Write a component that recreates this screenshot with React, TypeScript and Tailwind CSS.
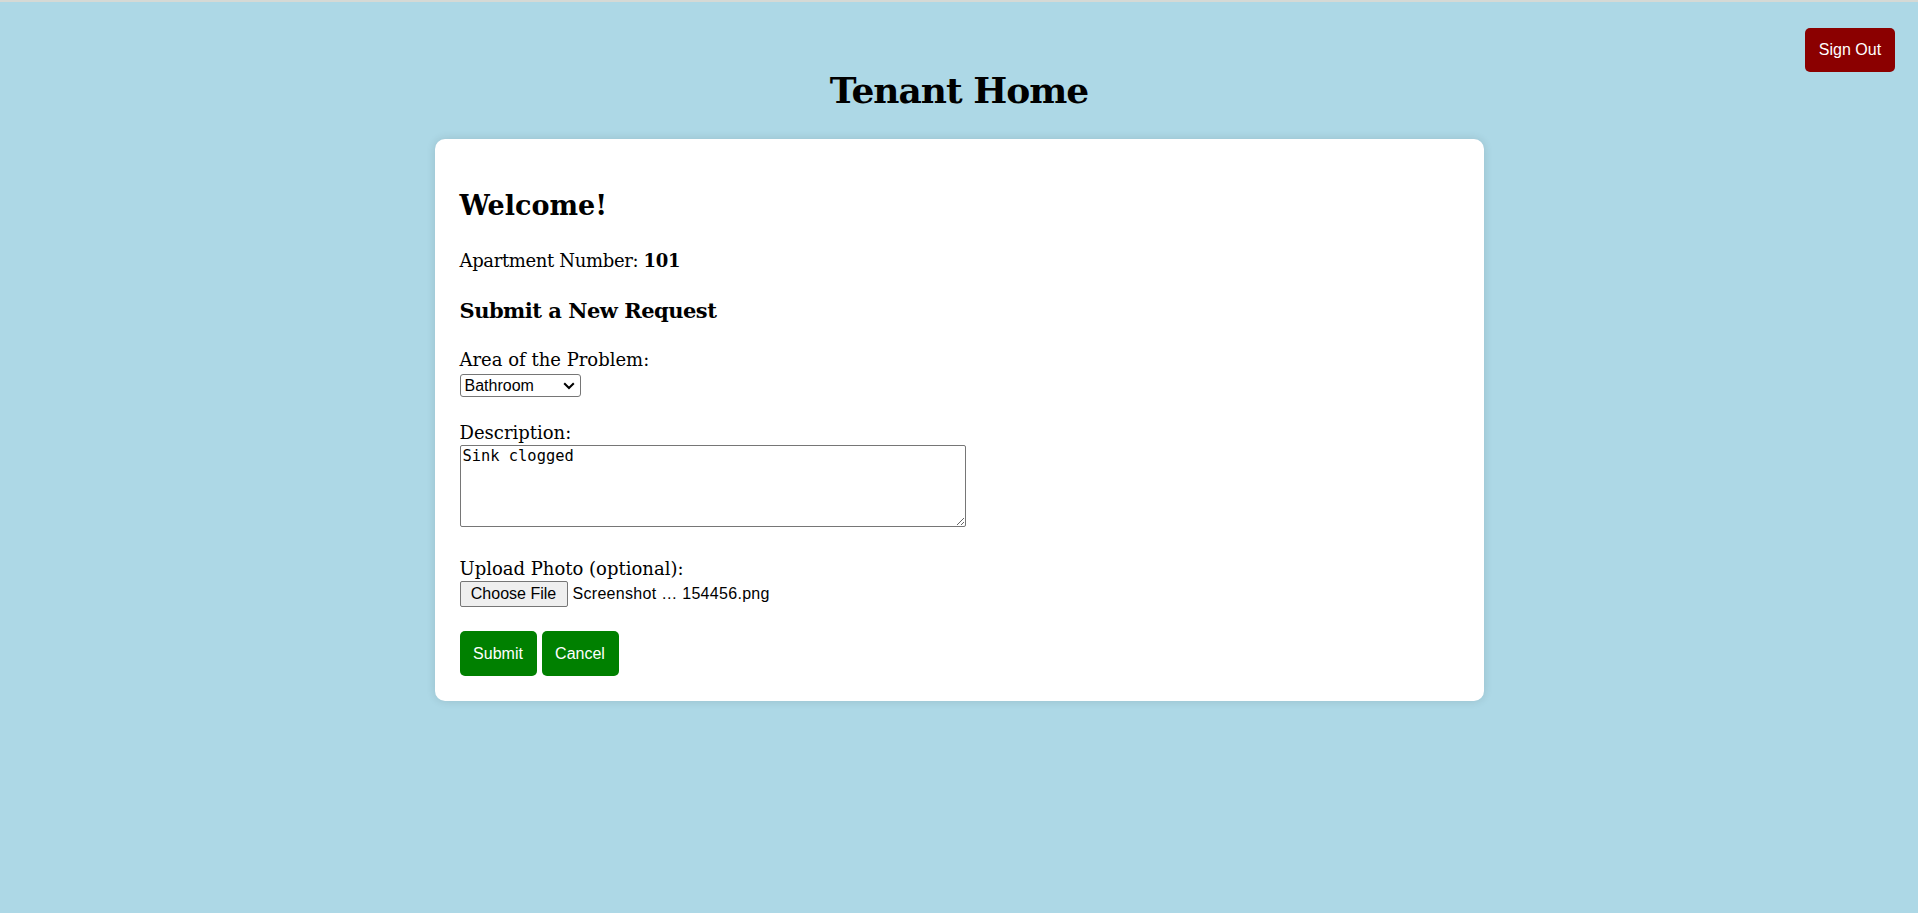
import React from "react";

export default function App() {
  return (
    <div className="min-h-screen w-full bg-[#add8e6] font-['DejaVu_Serif',serif] text-black">
      <div className="h-[2px] bg-[#d5d9d5]" />
      <header className="grid grid-cols-[1fr_auto_1fr]">
        <div />
        <h1 className="mt-[70px] text-[36px] leading-[37px] font-bold tracking-[-1px]">Tenant Home</h1>
        <div className="flex items-start justify-end">
          <button className="mt-[26px] mr-[23px] h-[44px] w-[90px] rounded-[5px] bg-[#8b0000] font-['Liberation_Sans',Arial,sans-serif] text-[16px] text-white">
            Sign Out
          </button>
        </div>
      </header>

      <main className="mx-auto mt-[30px] w-[1049px] rounded-[10px] bg-white p-[25px] shadow-[0_0_10px_rgba(0,0,0,0.12)]">
        <h2 className="mt-[28px] text-[27px] leading-[27px] font-bold">Welcome!</h2>
        <p className="mt-[33px] text-[18px] leading-[18px] tracking-[-0.35px]">
          Apartment Number: <strong>101</strong>
        </p>
        <h3 className="mt-[30px] text-[21px] leading-[22px] font-bold tracking-[-0.5px]">Submit a New Request</h3>

        <label className="mt-[29px] block text-[18px] leading-[18px]">Area of the Problem:</label>
        <div className="relative mt-[5px] h-[23px] w-[121px]">
          <select
            defaultValue="Bathroom"
            className="block h-[23px] w-[121px] appearance-none rounded-[3px] border border-[#767676] bg-white pl-[4px] font-['Liberation_Sans',Arial,sans-serif] text-[16px] leading-[19px] text-black"
          >
            <option>Bathroom</option>
            <option>Kitchen</option>
            <option>Bedroom</option>
            <option>Living Room</option>
            <option>Other</option>
          </select>
          <svg
            className="pointer-events-none absolute top-[8px] right-[6px]"
            width="12"
            height="8"
            viewBox="0 0 12 8"
            fill="none"
          >
            <polyline points="1.2,1.2 6,6 10.8,1.2" stroke="#000" strokeWidth="2" />
          </svg>
        </div>

        <label className="mt-[27px] block text-[18px] leading-[18px]">Description:</label>
        <textarea
          defaultValue="Sink clogged"
          className="mt-[3px] block h-[82px] w-[506px] rounded-[2px] border border-[#767676] bg-white px-[2px] py-[1px] font-['DejaVu_Sans_Mono',monospace] text-[15.4px] leading-[18px] text-black"
        />

        <label className="mt-[33px] block text-[18px] leading-[18px]">Upload Photo (optional):</label>
        <div className="mt-[3px] flex h-[26px] items-center font-['Liberation_Sans',Arial,sans-serif] text-[16px]">
          <span className="flex h-[26px] w-[108px] items-center justify-center rounded-[2px] border border-[#767676] bg-[#efefef] text-black">
            Choose File
          </span>
          <span className="ml-[5px] tracking-[0.3px] text-black">Screenshot … 154456.png</span>
        </div>

        <div className="mt-[24px] flex gap-[5px]">
          <button className="h-[45px] w-[77px] rounded-[5px] bg-[#008000] font-['Liberation_Sans',Arial,sans-serif] text-[16px] text-white">
            Submit
          </button>
          <button className="h-[45px] w-[77px] rounded-[5px] bg-[#008000] font-['Liberation_Sans',Arial,sans-serif] text-[16px] text-white">
            Cancel
          </button>
        </div>
      </main>
    </div>
  );
}
